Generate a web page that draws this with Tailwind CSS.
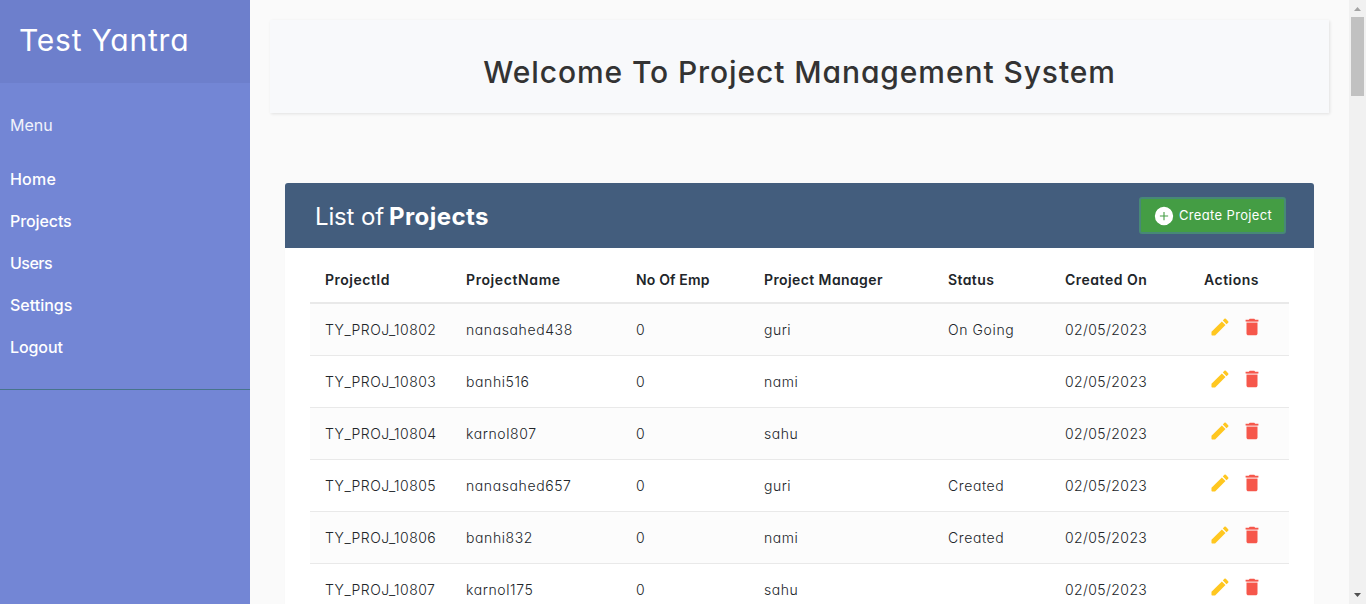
<!DOCTYPE html>
<html lang="en">
<head>
<meta charset="utf-8">
<title>Project Management System</title>
<script src="https://cdn.jsdelivr.net/npm/@tailwindcss/browser@4"></script>
</head>
<body class="flex h-[604px] w-[1366px] overflow-hidden bg-[#fafafa] font-['Inter','Open_Sans',sans-serif] [font-feature-settings:'cv11'] text-[#212529]">
<svg class="hidden">
  <symbol id="pencil" viewBox="0 0 24 24"><path d="M2.700 17.050V20.400q0 .8.8.8h3.150L18 9.940l-3.950-3.950zM20.900 7.240a1.200 1.200 0 0 0 0-1.610l-2.540-2.540a1.200 1.200 0 0 0-1.610 0l-1.630 1.830 3.950 3.950z"/></symbol>
  <symbol id="trash" viewBox="0 0 24 24"><path d="M6 19c0 1.100.9 2 2 2h8c1.100 0 2-.9 2-2V7.500H6zM19 4h-3.500l-1-1h-5l-1 1H5v2h14z"/><path d="M6 6h12v1.500H6z" opacity=".5"/></symbol>
</svg>
<aside class="flex w-[250px] shrink-0 flex-col bg-[#7386d5] text-base text-white">
  <div class="flex h-[83px] shrink-0 items-center bg-[#6d7fcc] pl-[19px] pb-[3px]"><h3 class="text-[30px] tracking-[0.78px]">Test Yantra</h3></div>
  <nav class="flex h-[307px] flex-col border-b border-[#47748b] px-[10px] pt-[21px]">
    <p class="flex h-[42px] items-center text-white/90">Menu</p>
    <div class="flex flex-col pt-3 font-medium">
      <a class="flex h-[42px] items-center tracking-[0.2px]">Home</a>
      <a class="flex h-[42px] items-center tracking-[-0.1px]">Projects</a>
      <a class="flex h-[42px] items-center tracking-[-0.5px]">Users</a>
      <a class="flex h-[42px] items-center">Settings</a>
      <a class="flex h-[42px] items-center tracking-[-0.1px]">Logout</a>
    </div>
  </nav>
</aside>
<main class="flex w-[1099px] shrink-0 flex-col pl-5 pr-5 pt-5">
  <div class="flex h-[93px] shrink-0 items-center justify-center bg-[#f8f9fb] pt-[11px] shadow-[1px_1px_3px_rgba(0,0,0,0.1)]">
    <h2 class="whitespace-nowrap text-[30px] font-medium tracking-[0.9px] text-[#333]">Welcome To Project Management System</h2>
  </div>
  <section class="mx-[15px] mt-[70px] h-[421px] shrink-0 overflow-hidden rounded-t-[3px] bg-white shadow-[0_1px_1px_rgba(0,0,0,0.05)]">
    <header class="flex h-[65px] items-center justify-between bg-[#435d7d] pl-[30px] pr-7 text-white">
      <h2 class="flex items-baseline gap-[5px] pt-[3px] text-2xl"><span class="tracking-[-0.15px]">List of</span><b class="tracking-[0.45px]">Projects</b></h2>
      <button class="flex h-[37px] w-[147px] items-center rounded-[3px] border-2 border-[#478877] bg-[#449d44] pl-3 text-[13px] tracking-[0.35px]">
        <svg class="mr-[4px] size-[22px] shrink-0" viewBox="0 0 24 24" fill="#fff"><path d="M12 2a10 10 0 1 0 0 20 10 10 0 0 0 0-20zm4.500 10.600h-3.900v3.900h-1.200v-3.900H7.500v-1.200h3.900V7.500h1.200v3.900h3.900z"/></svg>
        <span class="whitespace-nowrap">Create Project</span>
      </button>
    </header>
    <div class="mx-[25px] flex flex-col text-sm">
      <div class="grid h-[56px] grid-cols-[141px_170px_128px_184px_117px_139px_100px] items-center border-b-2 border-[#e9e9e9] pt-[10px] font-semibold tracking-[0.5px] [&>span]:pl-[15px]">
        <span>ProjectId</span><span class="tracking-[0.6px]">ProjectName</span><span class="tracking-[0.15px]">No Of Emp</span><span class="tracking-[0.4px]">Project Manager</span><span class="tracking-[0.4px]">Status</span><span>Created On</span><span>Actions</span>
      </div>
      <div id="rows" class="flex flex-col"></div>
    </div>
  </section>
</main>
<div class="flex w-[17px] shrink-0 flex-col items-center justify-between bg-[#f1f1f1]">
  <div class="flex flex-col items-center">
    <svg class="h-[17px] w-[17px]" viewBox="0 0 17 17" fill="#a3a3a3"><path d="M5 11h7L8.500 7z"/></svg>
    <div class="h-[79px] w-[13px] bg-[#c1c1c1]"></div>
  </div>
  <svg class="h-[17px] w-[17px]" viewBox="0 0 17 17" fill="#505050"><path d="M5 6h7l-3.500 4z"/></svg>
</div>
<script>
const projects = [
  ['TY_PROJ_10802', 'nanasahed438', 'guri', 'On Going'],
  ['TY_PROJ_10803', 'banhi516', 'nami', ''],
  ['TY_PROJ_10804', 'karnol807', 'sahu', ''],
  ['TY_PROJ_10805', 'nanasahed657', 'guri', 'Created'],
  ['TY_PROJ_10806', 'banhi832', 'nami', 'Created'],
  ['TY_PROJ_10807', 'karnol175', 'sahu', '']
];
document.getElementById('rows').innerHTML = projects.map(([id, name, manager, status]) => `
  <div class="grid h-[52px] grid-cols-[141px_170px_128px_184px_117px_139px_100px] items-center border-b border-[#e9e9e9] font-light odd:bg-[#fcfcfc] [&>span]:pl-[15px] [&>span]:pt-px">
    <span class="tracking-[0.45px]">${id}</span><span class="tracking-[0.6px]">${name}</span><span>0</span><span class="tracking-[0.5px]">${manager}</span><span class="tracking-[0.6px]">${status}</span><span class="tracking-[0.4px]">02/05/2023</span>
    <div class="flex gap-[10px] pb-[6px] pl-5">
      <svg class="size-[22px]" fill="#ffc720"><use href="#pencil"/></svg>
      <svg class="size-[22px]" fill="#f6574b"><use href="#trash"/></svg>
    </div>
  </div>`).join('');
</script>
</body>
</html>
